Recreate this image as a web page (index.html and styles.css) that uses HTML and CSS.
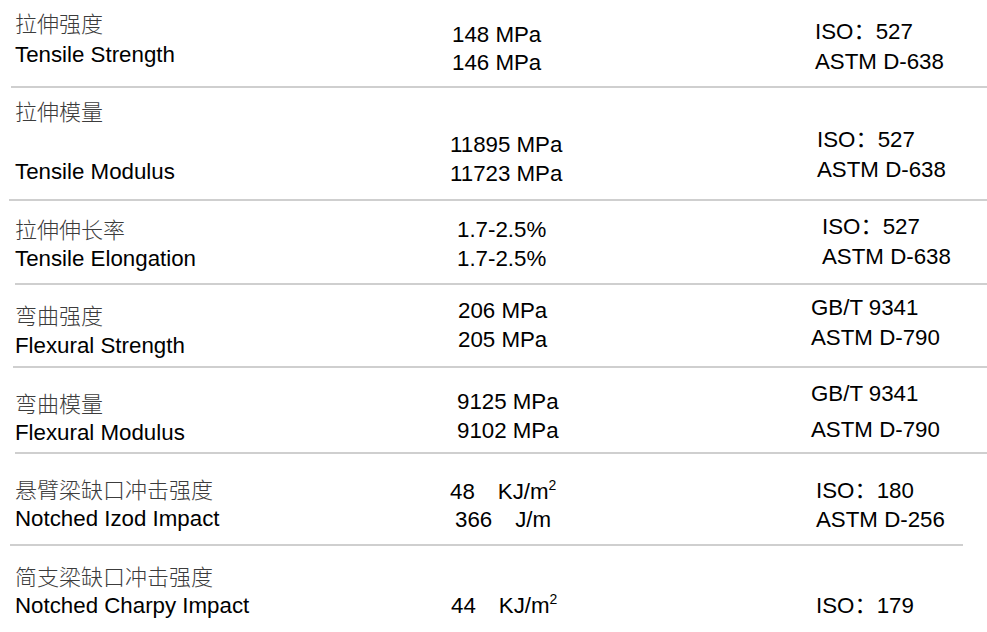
FILE: index.html
```html
<!DOCTYPE html>
<html lang="zh-CN">
<head>
<meta charset="utf-8">
<title>Properties</title>
<link rel="stylesheet" href="styles.css">
</head>
<body>
<div class="sheet">
  <div class="row r1">
    <div class="name"><div class="zh">拉伸强度</div><div class="en">Tensile Strength</div></div>
    <div class="val"><div>148 MPa</div><div>146 MPa</div></div>
    <div class="std"><div>ISO：527</div><div>ASTM D-638</div></div>
  </div>
  <div class="row r2">
    <div class="name"><div class="zh">拉伸模量</div><div class="en">Tensile Modulus</div></div>
    <div class="val"><div>11895 MPa</div><div>11723 MPa</div></div>
    <div class="std"><div>ISO：527</div><div>ASTM D-638</div></div>
  </div>
  <div class="row r3">
    <div class="name"><div class="zh">拉伸伸长率</div><div class="en">Tensile Elongation</div></div>
    <div class="val"><div>1.7-2.5%</div><div>1.7-2.5%</div></div>
    <div class="std"><div>ISO：527</div><div>ASTM D-638</div></div>
  </div>
  <div class="row r4">
    <div class="name"><div class="zh">弯曲强度</div><div class="en">Flexural Strength</div></div>
    <div class="val"><div>206 MPa</div><div>205 MPa</div></div>
    <div class="std"><div>GB/T 9341</div><div>ASTM D-790</div></div>
  </div>
  <div class="row r5">
    <div class="name"><div class="zh">弯曲模量</div><div class="en">Flexural Modulus</div></div>
    <div class="val"><div>9125 MPa</div><div>9102 MPa</div></div>
    <div class="std"><div>GB/T 9341</div><div>ASTM D-790</div></div>
  </div>
  <div class="row r6">
    <div class="name"><div class="zh">悬臂梁缺口冲击强度</div><div class="en">Notched Izod Impact</div></div>
    <div class="val"><div><span class="num">48</span><span class="unit">KJ/m<sup class="sup">2</sup></span></div><div class="shift"><span class="num">366</span><span class="unit">J/m</span></div></div>
    <div class="std"><div>ISO：180</div><div>ASTM D-256</div></div>
  </div>
  <div class="row r7">
    <div class="name"><div class="zh">简支梁缺口冲击强度</div><div class="en">Notched Charpy Impact</div></div>
    <div class="val"><div><span class="num">44</span><span class="unit">KJ/m<sup class="sup">2</sup></span></div></div>
    <div class="std"><div>ISO：179</div></div>
  </div>
</div>
</body>
</html>
```

FILE: styles.css
```css
html, body {
  margin: 0;
  padding: 0;
  background: #ffffff;
}

body {
  width: 987px;
  height: 632px;
  overflow: hidden;
  font-family: "Liberation Sans", Arial, "Noto Sans CJK SC", sans-serif;
  font-size: 22.3px;
  color: #000;
}

.sheet {
  display: flex;
  flex-direction: column;
}

.row {
  display: grid;
  grid-template-columns: 435px 361px 1fr;
  box-sizing: border-box;
  height: var(--h);
  margin-left: var(--ml);
  margin-right: var(--mr, 0px);
  padding-left: calc(15px - var(--ml));
  border-bottom: 2px solid #cfcfcf;
}

.name {
  padding-top: var(--nt);
  line-height: var(--nl);
}

.val {
  padding-top: var(--vt);
  line-height: var(--vl);
  padding-left: var(--vx, 0px);
}

.std {
  padding-top: var(--st);
  line-height: var(--sl);
  padding-left: var(--sx, 0px);
}

.zh {
  color: #3c3c3c;
  font-weight: 300;
  font-size: 22px;
}

.en {
  margin-top: var(--ng, 0px);
}

.unit {
  margin-left: 23px;
}

.shift {
  padding-left: 5px;
}

.sup {
  font-size: 14px;
  line-height: 0;
  vertical-align: 9px;
}

.r1 { --h: 88px;  --ml: 11px; --nt: 10px;  --nl: 30px; --vt: 21px; --vl: 28px; --vx: 2px; --st: 17px; --sl: 30px; --sx: 4px; }
.r2 { --h: 113px; --ml: 9px;  --nt: 10px;  --nl: 29px; --ng: 30px; --vt: 42px; --vl: 29px; --vx: 0px; --st: 37px; --sl: 30px; --sx: 6px; }
.r3 { --h: 84px;  --ml: 15px; --nt: 16px;  --nl: 28px; --vt: 14px; --vl: 29px; --vx: 7px; --st: 11px; --sl: 30px; --sx: 11px; }
.r4 { --h: 83px;  --ml: 13px; --nt: 17px;  --nl: 29px; --vt: 11px; --vl: 29px; --vx: 8px; --st: 8px;  --sl: 30px; --sx: 0px; }
.r5 { --h: 86px;  --ml: 15px; --nt: 23px;  --nl: 28px; --vt: 19px; --vl: 29px; --vx: 7px; --st: 8px;  --sl: 36px; --sx: 0px; }
.r6 { --h: 92px;  --ml: 10px; --mr: 24px; --nt: 23px; --nl: 28px; --vt: 24px; --vl: 28px; --vx: 0px; --st: 22px; --sl: 29px; --sx: 5px; }
.r7 { --h: 86px;  --ml: 10px; --nt: 18px;  --nl: 28px; --vt: 46px; --vl: 28px; --vx: 1px; --st: 46px; --sl: 28px; --sx: 5px; border-bottom: none; }
```
